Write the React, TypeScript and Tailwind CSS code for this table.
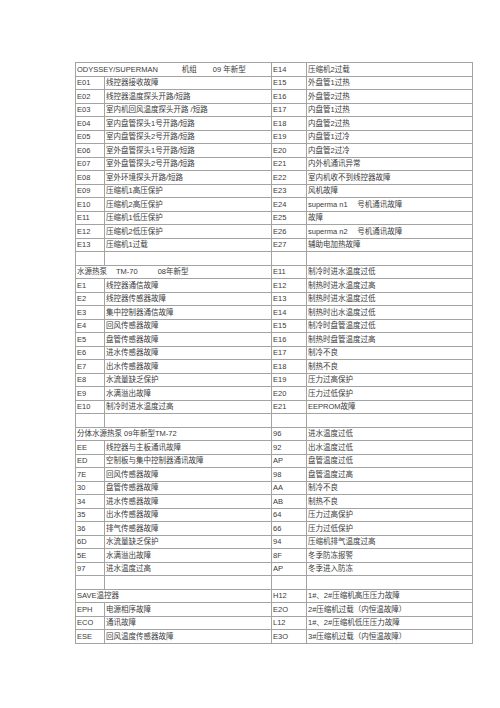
import React from "react";

type Cell = [string, string];
type Row = { left: Cell | string | null; right: Cell | null };

const header1 = (
  <span>
    ODYSSEY/SUPERMAN<span className="ml-[24px]">机组</span>
    <span className="ml-[16px]">09 年新型</span>
  </span>
);

const header2 = (
  <span>
    水源热泵<span className="ml-[9px]">TM-70</span>
    <span className="ml-[20px]">08年新型</span>
  </span>
);

const pair = (l: Cell[], r: Cell[], head: string): Row[] => {
  const rows: Row[] = [];
  rows.push({ left: head, right: r[0] });
  l.forEach((c, i) => rows.push({ left: c, right: r[i + 1] ?? null }));
  return rows;
};

const block1 = pair(
  [
    ["E01", "线控器接收故障"],
    ["E02", "线控器温度探头开路/短路"],
    ["E03", "室内机回风温度探头开路 /短路"],
    ["E04", "室内盘管探头1号开路/短路"],
    ["E05", "室内盘管探头2号开路/短路"],
    ["E06", "室外盘管探头1号开路/短路"],
    ["E07", "室外盘管探头2号开路/短路"],
    ["E08", "室外环境探头开路/短路"],
    ["E09", "压缩机1高压保护"],
    ["E10", "压缩机2高压保护"],
    ["E11", "压缩机1低压保护"],
    ["E12", "压缩机2低压保护"],
    ["E13", "压缩机1过载"],
  ],
  [
    ["E14", "压缩机2过载"],
    ["E15", "外盘管1过热"],
    ["E16", "外盘管2过热"],
    ["E17", "内盘管1过热"],
    ["E18", "内盘管2过热"],
    ["E19", "内盘管1过冷"],
    ["E20", "内盘管2过冷"],
    ["E21", "内外机通讯异常"],
    ["E22", "室内机收不到线控器故障"],
    ["E23", "风机故障"],
    ["E24", "superma n1\u2003 号机通讯故障"],
    ["E25", "故障"],
    ["E26", "superma n2\u2003 号机通讯故障"],
    ["E27", "辅助电加热故障"],
  ],
  "h1"
);

const block2 = pair(
  [
    ["E1", "线控器通信故障"],
    ["E2", "线控器传感器故障"],
    ["E3", "集中控制器通信故障"],
    ["E4", "回风传感器故障"],
    ["E5", "盘管传感器故障"],
    ["E6", "进水传感器故障"],
    ["E7", "出水传感器故障"],
    ["E8", "水流量缺乏保护"],
    ["E9", "水满溢出故障"],
    ["E10", "制冷时进水温度过高"],
  ],
  [
    ["E11", "制冷时进水温度过低"],
    ["E12", "制热时进水温度过高"],
    ["E13", "制热时进水温度过低"],
    ["E14", "制热时出水温度过低"],
    ["E15", "制冷时盘管温度过低"],
    ["E16", "制热时盘管温度过高"],
    ["E17", "制冷不良"],
    ["E18", "制热不良"],
    ["E19", "压力过高保护"],
    ["E20", "压力过低保护"],
    ["E21", "EEPROM故障"],
  ],
  "h2"
);

const block3 = pair(
  [
    ["EE", "线控器与主板通讯故障"],
    ["ED", "空制板与集中控制器通讯故障"],
    ["7E", "回风传感器故障"],
    ["30", "盘管传感器故障"],
    ["34", "进水传感器故障"],
    ["35", "出水传感器故障"],
    ["36", "排气传感器故障"],
    ["6D", "水流量缺乏保护"],
    ["5E", "水满溢出故障"],
    ["97", "进水温度过高"],
  ],
  [
    ["96", "进水温度过低"],
    ["92", "出水温度过低"],
    ["AP", "盘管温度过低"],
    ["98", "盘管温度过高"],
    ["AA", "制冷不良"],
    ["AB", "制热不良"],
    ["64", "压力过高保护"],
    ["66", "压力过低保护"],
    ["94", "压缩机排气温度过高"],
    ["8F", "冬季防冻报警"],
    ["AP", "冬季进入防冻"],
  ],
  "分体水源热泵 09年新型TM-72"
);

const block4 = pair(
  [
    ["EPH", "电源相序故障"],
    ["ECO", "通讯故障"],
    ["ESE", "回风温度传感器故障"],
  ],
  [
    ["H12", "1#、2#压缩机高压压力故障"],
    ["E2O", "2#压缩机过载（内恒温故障）"],
    ["L12", "1#、2#压缩机低压压力故障"],
    ["E3O", "3#压缩机过载（内恒温故障）"],
  ],
  "SAVE温控器"
);

const blank: Row = { left: ["", ""], right: ["", ""] };

const rows: Row[] = [...block1, blank, ...block2, blank, ...block3, blank, ...block4];

const TableRow = ({ row }: { row: Row }) => {
  const left = row.left;
  const right = row.right ?? ["", ""];
  return (
    <div className="flex h-[13.5px] border-b border-[#a3a3a3] items-center">
      {typeof left === "string" ? (
        <div className="w-[196px] h-full border-l border-[#a3a3a3] pl-px flex items-center whitespace-nowrap">
          {left === "h1" ? header1 : left === "h2" ? header2 : left}
        </div>
      ) : (
        <>
          <div className="w-[29px] h-full border-l border-[#a3a3a3] pl-px flex items-center">{left?.[0]}</div>
          <div className="w-[167px] h-full border-l border-[#a3a3a3] pl-px flex items-center whitespace-nowrap">
            {left?.[1]}
          </div>
        </>
      )}
      <div className="w-[35px] h-full border-l border-[#a3a3a3] pl-px flex items-center">{right[0]}</div>
      <div className="w-[167px] h-full border-l border-r border-[#a3a3a3] pl-px flex items-center whitespace-nowrap">
        {right[1]}
      </div>
    </div>
  );
};

export default function App() {
  return (
    <div className="w-[500px] h-[708px] bg-white overflow-hidden">
      <div
        className="ml-[75px] mt-[62px] w-[398px] border-t border-[#a3a3a3] text-[7.5px] leading-none text-[#3a3a3a]"
        style={{ fontFamily: '"Liberation Sans", "Noto Sans CJK SC", sans-serif' }}
      >
        {rows.map((row, i) => (
          <TableRow key={i} row={row} />
        ))}
      </div>
    </div>
  );
}
